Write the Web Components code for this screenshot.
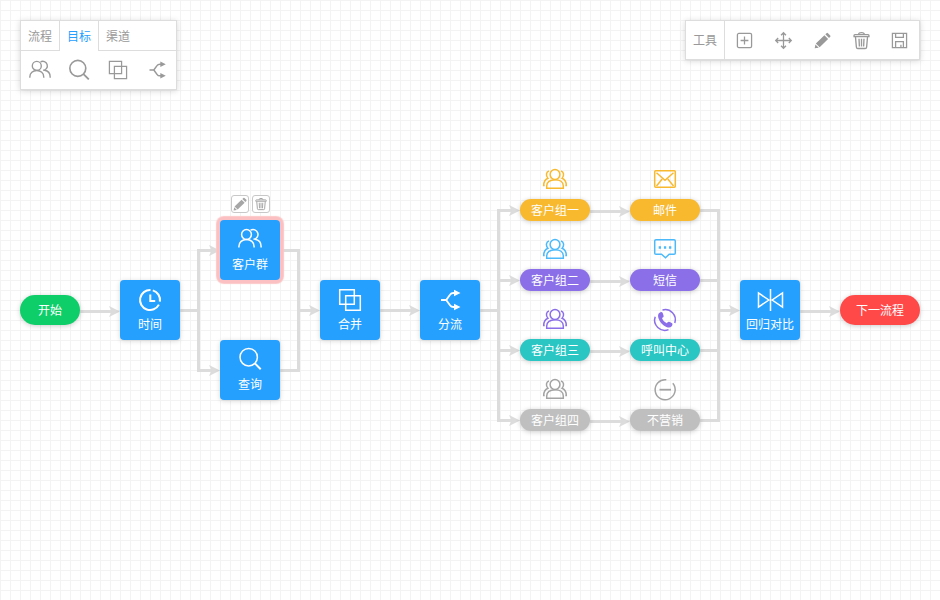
<!DOCTYPE html>
<html lang="zh-CN">
<head>
<meta charset="utf-8">
<title>流程</title>
<style>
html,body{margin:0;height:100%;overflow:hidden;background:#fff}
body{font:12px/16px "Noto Sans CJK SC","Liberation Sans",sans-serif}
</style>
</head>
<body>
<flow-canvas>
  <tool-palette slot="palette"></tool-palette>
  <tool-bar slot="tools"></tool-bar>

  <flow-pill style="left:20px;top:295px;--w:60px;--h:30px;--c:#0dce68">开始</flow-pill>
  <flow-node icon="clock" style="left:120px;top:280px">时间</flow-node>
  <flow-node icon="people" selected style="left:220px;top:220px">客户群</flow-node>
  <flow-node icon="search" style="left:220px;top:340px">查询</flow-node>
  <flow-node icon="merge" style="left:320px;top:280px">合并</flow-node>
  <flow-node icon="split" style="left:420px;top:280px">分流</flow-node>

  <flow-pill icon="group" style="left:520px;top:199px;--c:#f8b92f;--i:#f8b92f">客户组一</flow-pill>
  <flow-pill icon="group" style="left:520px;top:269px;--c:#8b6fe8;--i:#4cb9fb">客户组二</flow-pill>
  <flow-pill icon="group" style="left:520px;top:339px;--c:#29c6c3;--i:#8b6fe8">客户组三</flow-pill>
  <flow-pill icon="group" style="left:520px;top:409px;--c:#bfbfbf;--i:#a3a3a3">客户组四</flow-pill>
  <flow-pill icon="mail" style="left:630px;top:199px;--c:#f8b92f;--i:#f8b92f">邮件</flow-pill>
  <flow-pill icon="chat" style="left:630px;top:269px;--c:#8b6fe8;--i:#4cb9fb">短信</flow-pill>
  <flow-pill icon="phone" style="left:630px;top:339px;--c:#29c6c3;--i:#8b6fe8">呼叫中心</flow-pill>
  <flow-pill icon="minus" style="left:630px;top:409px;--c:#bfbfbf;--i:#a3a3a3">不营销</flow-pill>

  <flow-node icon="compare" style="left:740px;top:280px">回归对比</flow-node>
  <flow-pill style="left:840px;top:295px;--w:80px;--h:30px;--c:#ff4949">下一流程</flow-pill>
</flow-canvas>

<script>
// Icon drawings on a 24x24 grid, stroked in the current colour.
const ICONS = {
  people: `<circle cx="8.500" cy="7.500" r="4.900"/><path d="M.9 20.500v-1c0-4.200 3.300-7 7.600-7s7.600 2.800 7.600 7v1M12.600 3.200A4.900 4.900 0 1 1 15.500 12.300M17 12.300c3.800.6 6.100 3.300 6.100 7.200v1"/>`,
  search: `<circle cx="10.700" cy="10.200" r="8.700"/><path d="M16.900 16.400l5.800 5.800" stroke-width="2"/>`,
  merge: `<path d="M1.700 1.700h14.600v14.600H1.700zM7.700 7.700h14.600v14.600H7.700z"/>`,
  split: `<path d="M3 12h5.200L12 6.800Q13.200 5 15.500 5H18M8.200 12l3.800 5.200Q13.200 19 15.500 19H18" stroke-width="1.800"/><path d="M16 1.700l6.500 3.300-6.500 3.300zM16 15.700l6.500 3.300-6.500 3.300z" fill="currentColor" stroke="none"/>`,
  clock: `<path d="M14.800 2.400A10 10 0 0 1 21.900 13.600M20.900 16.600A10 10 0 1 1 12.500 2" stroke-width="2"/><path d="M12.300 6.500v6.500h4.900" stroke-width="2"/>`,
  compare: `<path d="M12.500 1v22M.5 5v14L10.800 12zM24.500 5v14L14.200 12z"/>`,
  group: `<circle cx="12" cy="6.500" r="4.900"/><path d="M3.700 20.300v-2.300c0-3.800 3.300-6.200 8.300-6.200s8.300 2.400 8.300 6.200v2.300zM6 3C3.200 3.700 2.500 7.800 4.900 10.200 2 11.400.7 13.800.7 17.500H1.700M18 3c2.800.7 3.500 4.800 1.100 7.200 2.900 1.200 4.200 3.600 4.200 7.300H22.300"/>`,
  mail: `<rect x="1.700" y="2.700" width="20.600" height="16.600" rx="1"/><path d="M3.500 4.700L12 12.300 20.500 4.700M3.500 18l5.700-7M20.500 18l-5.700-7"/>`,
  chat: `<path d="M3 1.700h18q1.300 0 1.300 1.300v12q0 1.300-1.300 1.300h-4.800L12.500 19.700 8.500 16.300H3q-1.300 0-1.300-1.300v-12Q1.700 1.700 3 1.700z"/><path d="M5.700 9.500h2.300M10.900 9.500h2.300M16 9.500h2.300" stroke-width="2.300"/>`,
  phone: `<path d="M9.500 2A10.200 10.200 0 0 1 21.800 15M15.500 21.600A10.200 10.200 0 0 1 2.200 8.800" stroke-width="1.500"/><path d="M7.500 4.200c-2.700 1-3 3.800-1.500 7.300 1.700 3.800 5 7 8.800 7.900 2.400.5 4-.4 4.600-2.600.2-.9 0-1.400-.7-1.800l-2.500-1.200c-.7-.3-1.200-.1-1.600.4l-.8 1c-2-.7-4-2.800-4.800-5.100l1.200-.9c.5-.4.600-.9.4-1.500l-.9-2.600c-.4-1-1.200-1.300-2.200-.9z" fill="currentColor" stroke="none"/>`,
  minus: `<path d="M19.500 5.500A10 10 0 1 1 13 2" transform="translate(.3 -.2)"/><path d="M6.500 11.700h11.500" stroke-width="1.800"/>`,
  plus: `<rect x="2" y="2" width="20" height="20" rx="2"/><path d="M12 6.500v11M6.500 12h11"/>`,
  move: `<path d="M12 1v22M1 12h22M8.500 4.500L12 1l3.500 3.500M8.500 19.500L12 23l3.500-3.500M4.500 8.500L1 12l3.500 3.500M19.500 8.500L23 12l-3.500 3.500"/>`,
  pencil: `<path d="M14.700 4.600l5.200 5.200L8 21.400 2.600 16.200zM16 3.300l1.700-1.700q1-.9 2 0l3.200 3.200q.9 1 0 2L21.200 8.500zM2 17.600L6.700 22.200 1 23z" fill="currentColor" stroke="none"/>`,
  trash: `<path d="M1.500 6.500h21V5q0-1.200-1.200-1.200H2.700Q1.500 3.800 1.500 5zM8 3.500q0-2.700 4-2.700t4 2.700M3.500 7l1.300 14.500Q5 23.300 6.700 23.300h10.600q1.700 0 1.900-1.800L20.500 7M8.500 9.500l.5 11M12 9.500v11M15.500 9.500l-.5 11"/>`,
  save: `<path d="M2 2h20v20H2zM6.500 2v5.500h11V2M6.500 22v-8.500h11V22M14 18v3"/>`
};

class FlowIcon extends HTMLElement {
  connectedCallback() {
    const size = this.getAttribute('size') || 24;
    const weight = this.getAttribute('weight') || 1.5;
    this.attachShadow({mode: 'open'}).innerHTML = `
      <style>:host{display:block;flex:none;width:${size}px;height:${size}px}
      svg{display:block;overflow:visible;fill:none;stroke:currentColor;stroke-width:${weight}}</style>
      <svg width="${size}" height="${size}" viewBox="0 0 24 24">${ICONS[this.getAttribute('name')]}</svg>`;
  }
}
customElements.define('flow-icon', FlowIcon);

class FlowNode extends HTMLElement {
  connectedCallback() {
    this.attachShadow({mode: 'open'}).innerHTML = `
      <style>
      :host{position:absolute;box-sizing:border-box;width:60px;height:60px;padding-top:8px;display:flex;flex-direction:column;align-items:center;gap:4px;background:#26a0ff;border-radius:4px;color:#fff;box-shadow:0 1px 5px rgba(0,0,0,.16);white-space:nowrap}
      :host([icon=people]),:host([icon=search]){padding-top:7px;gap:5px}
      :host([selected]){box-shadow:0 0 0 3px #fbc0c1,0 0 1px 4px #fcc6c7}
      .actions{position:absolute;top:-25px;left:11px;display:flex;gap:3px;color:#a6a6a6}
      .actions span{box-sizing:border-box;width:18px;height:18px;border:1px solid #c8c8c8;border-radius:3px;background:#fff;display:grid;place-items:center}
      </style>
      ${this.hasAttribute('selected') ? `<div class="actions"><span><flow-icon name="pencil" size="14"></flow-icon></span><span><flow-icon name="trash" size="12" weight="2"></flow-icon></span></div>` : ''}
      <flow-icon name="${this.getAttribute('icon')}"></flow-icon><slot></slot>`;
  }
}
customElements.define('flow-node', FlowNode);

class FlowPill extends HTMLElement {
  connectedCallback() {
    const icon = this.getAttribute('icon');
    this.attachShadow({mode: 'open'}).innerHTML = `
      <style>
      :host{position:absolute;width:var(--w,70px);height:var(--h,22px);border-radius:15px;display:grid;place-items:center;background:var(--c);color:#fff;box-shadow:0 1px 5px rgba(0,0,0,.2);white-space:nowrap}
      flow-icon{position:absolute;top:-31px;left:23px;color:var(--i)}
      </style>
      ${icon ? `<flow-icon name="${icon}"></flow-icon>` : ''}<span><slot></slot></span>`;
  }
}
customElements.define('flow-pill', FlowPill);

class ToolPalette extends HTMLElement {
  connectedCallback() {
    this.attachShadow({mode: 'open'}).innerHTML = `
      <style>
      :host{display:block;box-sizing:border-box;width:157px;height:70px;border:1px solid #ddd;background:rgba(255,255,255,.94);box-shadow:0 1px 6px rgba(0,0,0,.16);color:#999}
      .tabs{display:grid;grid-template-columns:38px 40px 38px 1fr;height:30px;line-height:29px;text-align:center}
      .tabs span{box-sizing:border-box;height:30px;border-bottom:1px solid #ddd}
      .tabs .on{color:#26a0ff;border:solid #ddd;border-width:0 1px}
      .icons{display:grid;grid-template-columns:38px 40px 38px 39px;height:38px;align-items:center;justify-items:center}
      </style>
      <div class="tabs"><span>流程</span><span class="on">目标</span><span>渠道</span><span></span></div>
      <div class="icons"><flow-icon name="people" size="22"></flow-icon><flow-icon name="search" size="22" weight="1.800"></flow-icon><flow-icon name="merge" size="20"></flow-icon><flow-icon name="split" size="20"></flow-icon></div>`;
  }
}
customElements.define('tool-palette', ToolPalette);

class ToolBar extends HTMLElement {
  connectedCallback() {
    this.attachShadow({mode: 'open'}).innerHTML = `
      <style>
      :host{box-sizing:border-box;width:235px;height:40px;display:grid;grid-template-columns:39px repeat(5,39px);align-items:center;justify-items:center;border:1px solid #ddd;background:rgba(255,255,255,.94);box-shadow:0 1px 6px rgba(0,0,0,.16);color:#999}
      .title{box-sizing:border-box;width:39px;height:38px;line-height:38px;text-align:center;border-right:1px solid #ddd}
      flow-icon[name=save]{margin-right:2px}
      </style>
      <span class="title">工具</span>
      ${[['plus', 17, 1.800], ['move', 17, 1.800], ['pencil', 17, 1], ['trash', 17, 1.900], ['save', 17, 1.800]].map(([n, s, w]) => `<flow-icon name="${n}" size="${s}" weight="${w}"></flow-icon>`).join('')}`;
  }
}
customElements.define('tool-bar', ToolBar);

class FlowCanvas extends HTMLElement {
  connectedCallback() {
    const rows = [210.5, 280.5, 350.5, 420.5];
    const heads = [[120, 311.5], [220, 250.5], [220, 370.5], [320, 310.5], [420, 310.5], [740, 310.5], [840, 311.5],
      ...rows.flatMap(y => [[520, y], [630, y + 1]])];
    const lines = `M80 311.500h32M180 310.500h18.500M212 250.500H198.500V370.500H212M280 250.500h18.500V370.500H280M298.500 310.500H312M380 310.500h32M480 310.500h18.500M512 210.500H498.500V420.500H512M498.500 280.500H512M498.500 350.500H512M700 210.500h18.500V420.500H700M700 280.500h18.500M700 350.500h18.500M718.500 310.500H732M800 311.500h32` +
      rows.map(y => `M590 ${y + 1}h32`).join('');
    this.attachShadow({mode: 'open'}).innerHTML = `
      <style>
      :host{position:relative;box-sizing:border-box;width:940px;height:600px;padding:20px;display:flex;justify-content:space-between;align-items:flex-start;background:linear-gradient(#f3f3f3 1px,transparent 1px) 0 0/10px 10px,linear-gradient(90deg,#f3f3f3 1px,transparent 1px) 0 0/10px 10px,#fff}
      svg{position:absolute;inset:0}
      </style>
      <svg width="940" height="600"><path d="${lines}" fill="none" stroke="#dcdcdc" stroke-width="3"/>
      <path fill="#dcdcdc" d="${heads.map(([x, y]) => `M${x} ${y}l-11-5.500 2.500 5.500-2.500 5.500z`).join('')}"/></svg>
      <slot name="palette"></slot><slot name="tools"></slot><slot></slot>`;
  }
}
customElements.define('flow-canvas', FlowCanvas);
</script>
</body>
</html>
